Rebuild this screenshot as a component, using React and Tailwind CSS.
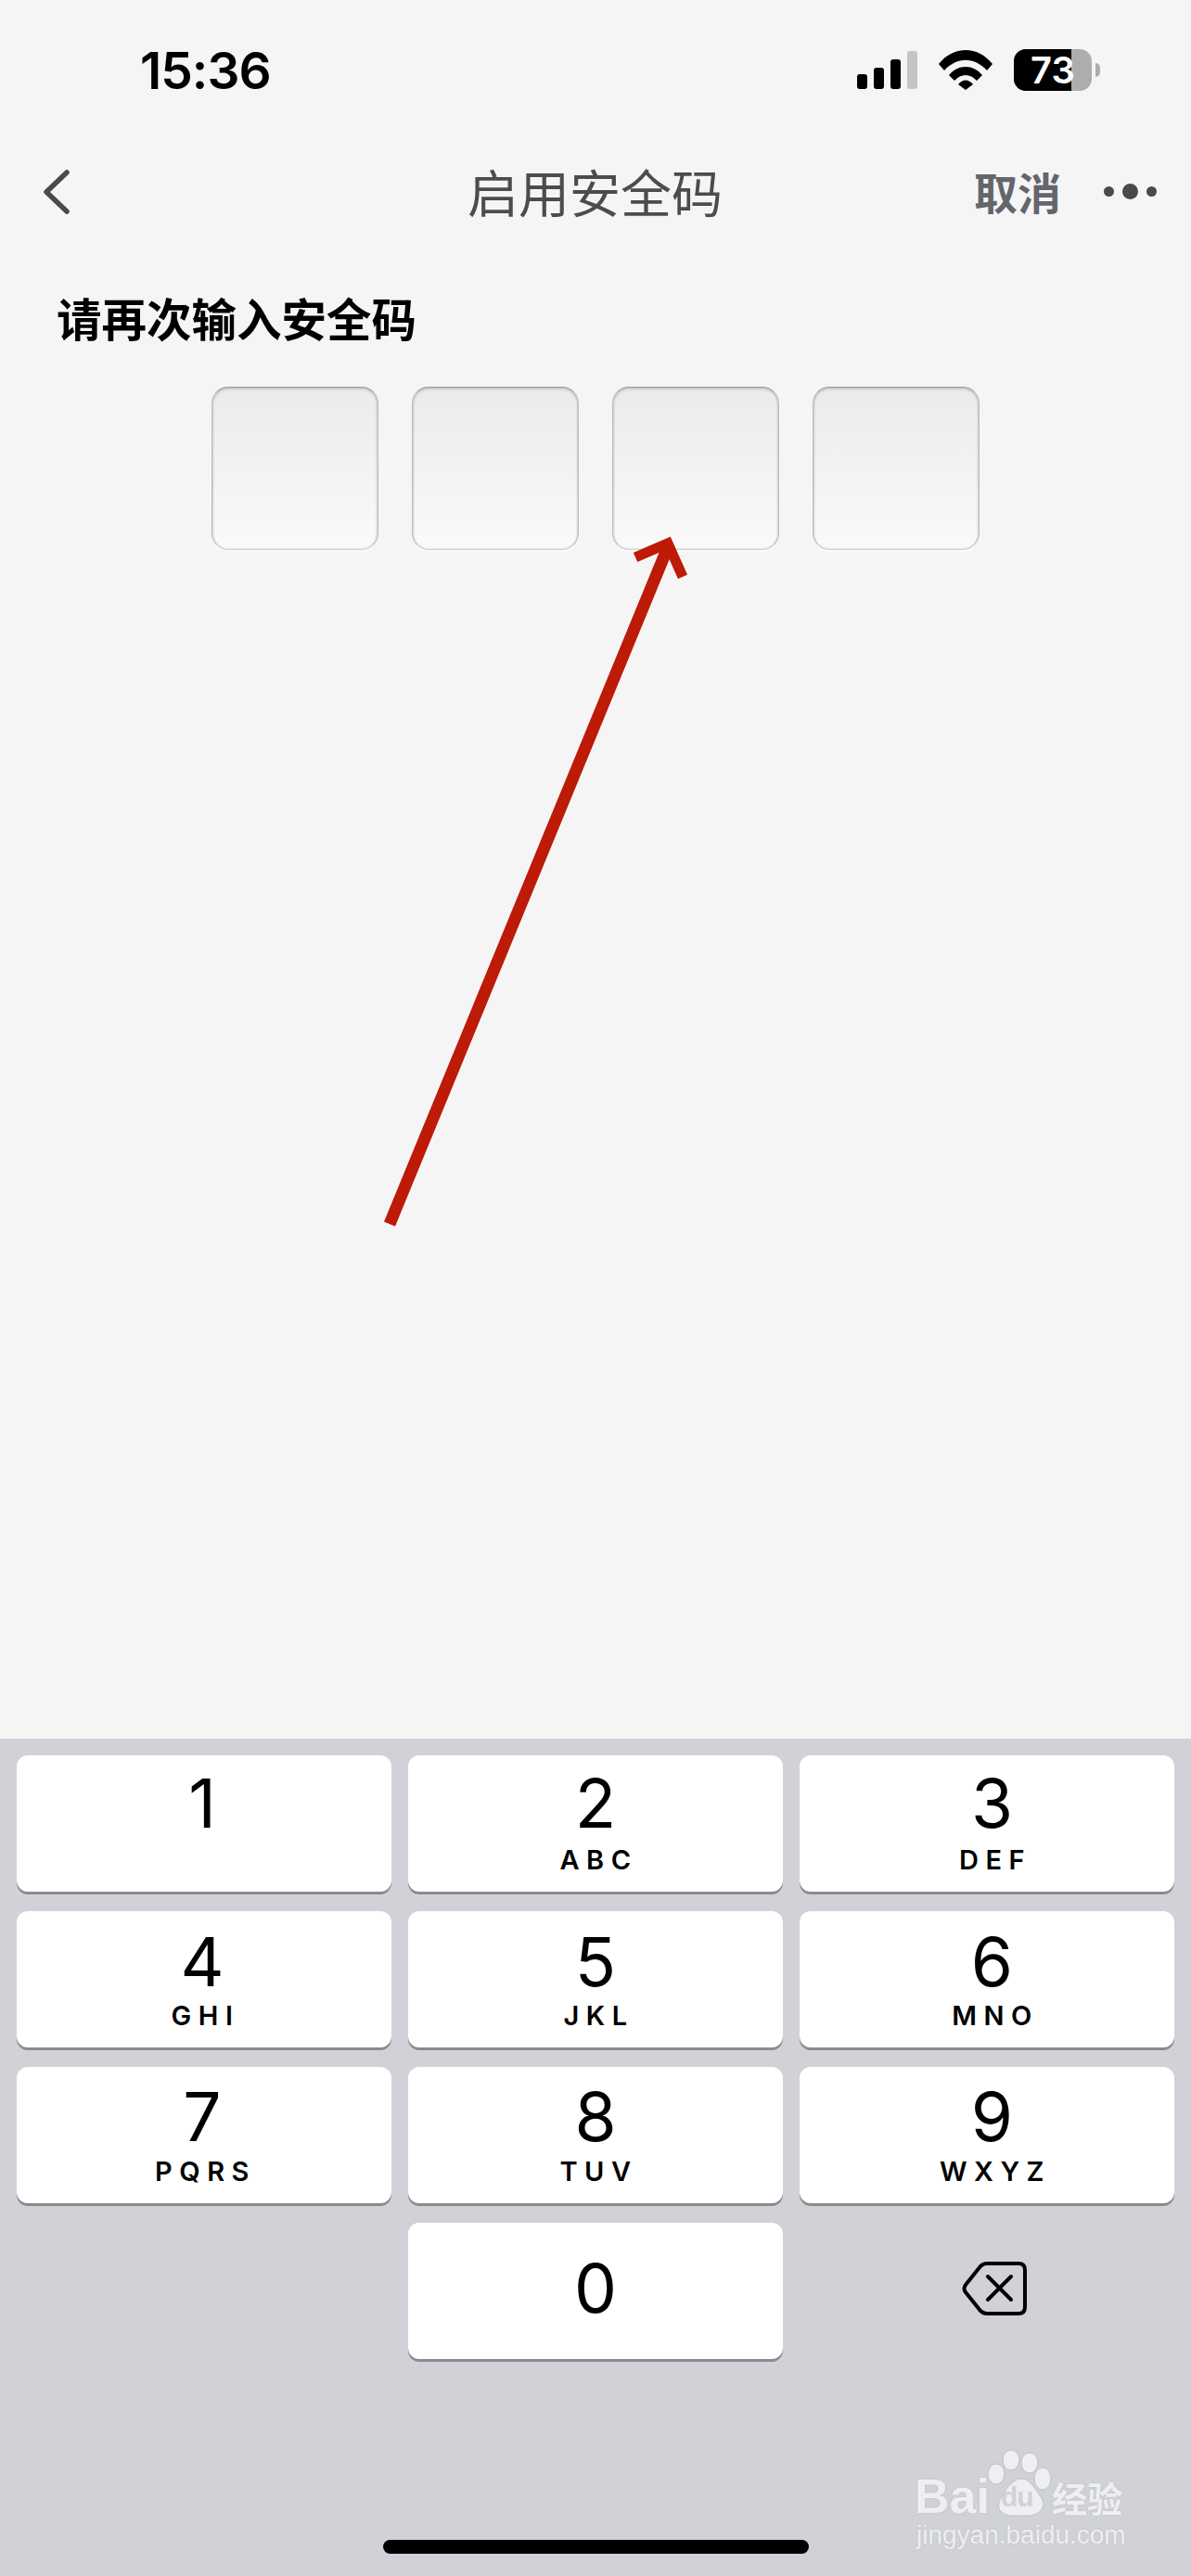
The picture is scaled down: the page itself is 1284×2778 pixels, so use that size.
const CJK = { fontFamily: '"Noto Sans CJK SC", "Noto Sans", sans-serif' };
const LIB = { fontFamily: '"Liberation Sans", sans-serif' };

const keys = [
  ['1', '', 'pr-[4px] pt-[8px]', ''], ['2', 'ABC', 'pt-[8px]', ''], ['3', 'DEF', 'pl-[11px] pt-[8px]', ''],
  ['4', 'GHI', 'pr-[4px] pt-[11px]', '-mt-[3px]'], ['5', 'JKL', 'pt-[11px]', '-mt-[3px]'], ['6', 'MNO', 'pl-[11px] pt-[11px]', '-mt-[3px]'],
  ['7', 'PQRS', 'pr-[4px] pt-[10px]', '-mt-[2px]'], ['8', 'TUV', 'pt-[10px]', '-mt-[2px]'], ['9', 'WXYZ', 'pl-[11px] pt-[10px]', '-mt-[2px]'],
];

function Key({ d, l, cls, lcls }) {
  return (
    <div className={`h-[147px] rounded-[12px] bg-white shadow-[0_3px_0_#8b8b8f] flex flex-col items-center ${cls}`}>
      <span className="text-[73px] leading-[88px] font-normal text-black">{d}</span>
      {l && <span className={`text-[29px] leading-[34px] font-semibold tracking-[7.5px] pl-[7px] text-black ${lcls}`}>{l}</span>}
    </div>
  );
}

function Box() {
  return (
    <div className="w-[180px] h-[176px] rounded-[18px] bg-gradient-to-b from-[#ebebeb] to-[#fafafa] border border-[#bcbcbc] border-t-[#9c9c9c] border-b-[#cdcdcd] shadow-[inset_0_2px_3px_rgba(0,0,0,0.14),inset_1px_0_2px_rgba(0,0,0,0.1),inset_-1px_0_2px_rgba(0,0,0,0.1),0_2px_1px_rgba(255,255,255,0.6)]" />
  );
}

export default function App() {
  return (
    <div className="relative w-[1284px] h-[2778px] flex flex-col bg-[#f5f5f5] overflow-hidden" style={{ fontFamily: 'Inter, "Noto Sans CJK SC", sans-serif' }}>
      {/* status bar */}
      <div className="h-[153px] flex items-start">
        <span className="ml-[151px] mt-[43px] text-[55px] leading-[66px] font-semibold text-black tracking-[-1px]">15:36</span>
        <div className="ml-auto mr-[98px] mt-[53px] flex items-start">
          <div className="flex items-end gap-[7px] h-[43px]">
            <div className="w-[11px] h-[16px] rounded-[3px] bg-black" />
            <div className="w-[11px] h-[23px] rounded-[3px] bg-black" />
            <div className="w-[11px] h-[32px] rounded-[3px] bg-black" />
            <div className="w-[11px] h-[41px] rounded-[3px] bg-[#c4c4c4]" />
          </div>
          <svg className="ml-[23px] mt-[1px]" width="58" height="43" viewBox="0 0 58 43">
            <path d="M0 15 C16 -5 42 -5 58 15 L52 22 C38 7 20 7 6 22 Z" fill="#000" />
            <path d="M11 27 C21 15 37 15 47 27 L41 33 C34 25 24 25 17 33 Z" fill="#000" />
            <path d="M21 37 C26 31 32 31 37 37 L29 43 Z" fill="#000" />
          </svg>
          <div className="relative ml-[23px] w-[84px] h-[45px] rounded-[13px] bg-[#adadad]">
            <div className="absolute left-0 top-0 h-full w-[62px] rounded-l-[13px] bg-black" />
            <span className="absolute left-[18px] top-0 text-[40px] leading-[45px] font-semibold text-white">73</span>
          </div>
          <div className="ml-[4px] mt-[15px] w-[5px] h-[15px] rounded-r-full bg-[#adadad]" />
        </div>
      </div>

      {/* nav */}
      <div className="relative h-[110px] flex items-center">
        <svg className="ml-[44px] -mt-[3px]" width="34" height="50" viewBox="0 0 34 50" fill="none">
          <path d="M28 4 L6 25 L28 46" stroke="#4a4a4a" strokeWidth="5.5" strokeLinecap="round" strokeLinejoin="round" />
        </svg>
        <span className="absolute left-[504px] top-[23px] text-[55px] leading-[58px] text-[#4c4c4c]" style={CJK}>启用安全码</span>
        <span className="ml-auto -mt-[5px] text-[47px] leading-[58px] font-semibold text-[#63666b]" style={CJK}>取消</span>
        <div className="ml-[46px] mr-[37px] -mt-[4px] flex items-center gap-[9px]">
          <div className="w-[11px] h-[11px] rounded-full bg-[#4a4a4a]" />
          <div className="w-[17px] h-[17px] rounded-full bg-[#4a4a4a]" />
          <div className="w-[11px] h-[11px] rounded-full bg-[#4a4a4a]" />
        </div>
      </div>

      {/* prompt */}
      <div className="mt-[49px] ml-[61px] text-[48.5px] leading-[60px] font-bold text-black" style={CJK}>请再次输入安全码</div>

      {/* boxes */}
      <div className="mt-[45px] flex justify-center gap-[36px]">
        <Box /><Box /><Box /><Box />
      </div>

      <div className="flex-1" />

      {/* keyboard */}
      <div className="relative h-[903px] bg-[#d1d2d7] pt-[18px] px-[18px]">
        <div className="grid grid-cols-3 gap-x-[18px] gap-y-[21px]">
          {keys.map(([d, l, cls, lcls]) => <Key key={d} d={d} l={l} cls={cls} lcls={lcls} />)}
          <div />
          <Key d="0" l="" cls="pt-[27px]" lcls="" />
          <div className="flex items-center justify-center pl-[15px] pb-[5px]">
            <svg width="70" height="58" viewBox="0 0 70 58" fill="none" stroke="#000" strokeWidth="4" strokeLinecap="round" strokeLinejoin="round">
              <path d="M27 2 H61 Q68 2 68 9 V49 Q68 56 61 56 H27 Q23 56 20 53 L4 33 Q1 29 4 25 L20 5 Q23 2 27 2 Z" />
              <path d="M28 16 L53 41 M53 16 L28 41" />
            </svg>
          </div>
        </div>

        {/* home indicator */}
        <div className="absolute left-[413px] top-[864px] w-[459px] h-[15px] rounded-full bg-black" />

        {/* watermark */}
        <div className="absolute left-[985px] top-[765px] w-[232px] h-[112px] text-[#eeeff1] [text-shadow:0_0_2px_#b9bac0]">
          <svg className="absolute left-[80px] top-[2px]" width="70" height="72" viewBox="0 0 70 72" fill="#eeeff1" stroke="#c0c1c7" strokeWidth="1">
            <ellipse cx="25" cy="11" rx="9" ry="11" />
            <ellipse cx="45" cy="14" rx="9" ry="11" />
            <ellipse cx="9" cy="26" rx="9" ry="11" />
            <ellipse cx="59" cy="31" rx="9" ry="12" />
            <path d="M36 31 C46 31 52 44 58 52 C63 62 56 71 42 71 H28 C14 71 9 63 13 54 C17 46 26 31 36 31 Z" />
          </svg>
          <span className="absolute left-[1px] top-[22px] text-[52px] leading-[60px] font-bold" style={LIB}>Bai</span>
          <span className="absolute left-[94px] top-[35px] text-[30px] leading-[36px] font-bold tracking-[-1px] text-[#d1d2d7] [text-shadow:none]" style={LIB}>du</span>
          <span className="absolute left-[149px] top-[30px] text-[38px] leading-[46px] font-bold" style={CJK}>经验</span>
          <span className="absolute left-[3px] top-[76px] text-[28px] leading-[36px] whitespace-nowrap" style={LIB}>jingyan.baidu.com</span>
        </div>
      </div>

      {/* annotation arrow */}
      <svg className="absolute left-0 top-0 pointer-events-none" width="1284" height="1400" viewBox="0 0 1284 1400" fill="none">
        <path d="M420 1320 L720 590" stroke="#bd1a08" strokeWidth="13" />
        <path d="M685 601 L720 586 L736 622" stroke="#bd1a08" strokeWidth="11" />
      </svg>
    </div>
  );
}
